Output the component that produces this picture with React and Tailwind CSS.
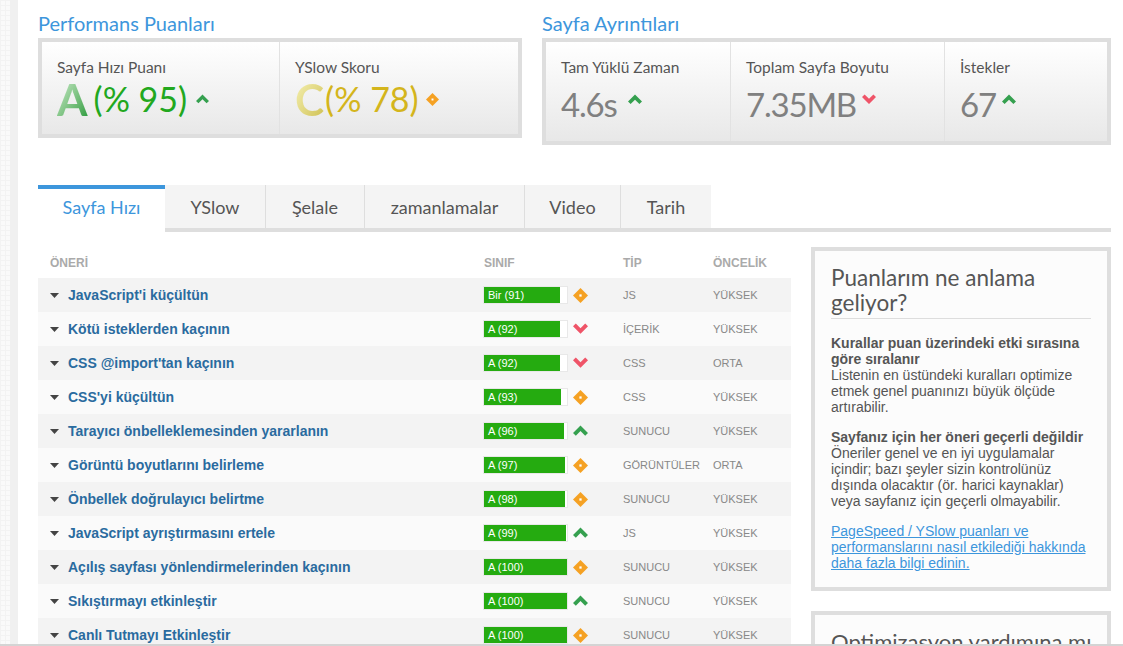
import React from 'react';

const rows = [
  { name: "JavaScript'i küçültün", grade: 'Bir (91)', score: 91, trend: 'same', type: 'JS', priority: 'YÜKSEK' },
  { name: 'Kötü isteklerden kaçının', grade: 'A (92)', score: 92, trend: 'down', type: 'İÇERİK', priority: 'YÜKSEK' },
  { name: "CSS @import'tan kaçının", grade: 'A (92)', score: 92, trend: 'down', type: 'CSS', priority: 'ORTA' },
  { name: "CSS'yi küçültün", grade: 'A (93)', score: 93, trend: 'same', type: 'CSS', priority: 'YÜKSEK' },
  { name: 'Tarayıcı önbelleklemesinden yararlanın', grade: 'A (96)', score: 96, trend: 'up', type: 'SUNUCU', priority: 'YÜKSEK' },
  { name: 'Görüntü boyutlarını belirleme', grade: 'A (97)', score: 97, trend: 'same', type: 'GÖRÜNTÜLER', priority: 'ORTA' },
  { name: 'Önbellek doğrulayıcı belirtme', grade: 'A (98)', score: 98, trend: 'same', type: 'SUNUCU', priority: 'YÜKSEK' },
  { name: 'JavaScript ayrıştırmasını ertele', grade: 'A (99)', score: 99, trend: 'up', type: 'JS', priority: 'YÜKSEK' },
  { name: 'Açılış sayfası yönlendirmelerinden kaçının', grade: 'A (100)', score: 100, trend: 'same', type: 'SUNUCU', priority: 'YÜKSEK' },
  { name: 'Sıkıştırmayı etkinleştir', grade: 'A (100)', score: 100, trend: 'up', type: 'SUNUCU', priority: 'YÜKSEK' },
  { name: 'Canlı Tutmayı Etkinleştir', grade: 'A (100)', score: 100, trend: 'same', type: 'SUNUCU', priority: 'YÜKSEK' },
];

const tabs = [
  { label: 'YSlow', width: 'w-[101px]' },
  { label: 'Şelale', width: 'w-[99px]' },
  { label: 'zamanlamalar', width: 'w-[160px]' },
  { label: 'Video', width: 'w-[96px]' },
  { label: 'Tarih', width: 'w-[90px]' },
];

const TrendIcon = ({ trend, size = 15 }) => {
  if (trend === 'same') {
    return (
      <svg width={size} height={size} viewBox="0 0 16 16" className="shrink-0">
        <path d="M8 0 16 8 8 16 0 8Z" fill="#f5a123" />
        <rect x="6.8" y="6.8" width="2.4" height="2.4" fill="#fff" />
      </svg>
    );
  }
  const up = trend === 'up';
  return (
    <svg width={size} height={size * 0.75} viewBox="0 0 16 12" className="shrink-0">
      <path
        d={up ? 'M0 8.5 8 0.5 16 8.5 13 11.5 8 6.5 3 11.5Z' : 'M0 3.5 3 0.5 8 5.5 13 0.5 16 3.5 8 11.5Z'}
        fill={up ? '#35a04f' : '#ef5468'}
      />
    </svg>
  );
};

const StatLabel = ({ children }) => (
  <div className="text-[15.5px] leading-[20px] text-[#555] font-['Lato',sans-serif]">{children}</div>
);

const DetailStat = ({ label, value, trend, className, iconClass = 'ml-[6px]' }) => (
  <div className={`pl-[15px] pt-[15px] border-r border-[#e2e2e2] last:border-r-0 ${className}`}>
    <StatLabel>{label}</StatLabel>
    <div className="flex items-start mt-[5px]">
      <span className="text-[33px] leading-[44px] tracking-[-1.2px] text-[#808080] font-['Lato',sans-serif]">{value}</span>
      <span className={`${iconClass} mt-[12px]`}><TrendIcon trend={trend} size={14} /></span>
    </div>
  </div>
);

const GradeRow = ({ row, odd }) => (
  <div className={`flex items-center h-[34px] text-[11px] text-[#888] ${odd ? 'bg-[#fafafa]' : 'bg-[#f3f3f3]'}`}>
    <svg width="9" height="5" viewBox="0 0 9 5" className="ml-[12px] shrink-0">
      <path d="M0 0H9L4.5 5Z" fill="#444" />
    </svg>
    <span className="ml-[9px] w-[415px] text-[14px] font-bold text-[#2a6b9f]">{row.name}</span>
    <div className="w-[85px] h-[18px] border border-[#e8e8e8] bg-white">
      <div
        className="h-full bg-[#25ab10] text-white text-[11px] leading-[16px] pl-[4px] whitespace-nowrap"
        style={{ width: `${row.score}%` }}
      >
        {row.grade}
      </div>
    </div>
    <span className="ml-[5px] w-[50px] flex"><TrendIcon trend={row.trend} /></span>
    <span className="w-[90px]">{row.type}</span>
    <span>{row.priority}</span>
  </div>
);

const App = () => {
  return (
    <div className="relative flex h-[646px] overflow-hidden bg-white font-['Liberation_Sans',Arial,sans-serif]">
      <div className="w-[18px] shrink-0 border-r-[8px] border-[#f0f0f0] bg-[#fafafa] bg-[linear-gradient(#f3f3f3_1px,transparent_1px),linear-gradient(90deg,#f3f3f3_1px,transparent_1px)] bg-[size:5px_5px]" />

      <div className="ml-[20px] w-[1073px] shrink-0">
        <div className="flex items-start pt-[11px]">
          <div className="w-[484px]">
            <h2 className="text-[20px] leading-[24px] mb-[3px] text-[#3d96dc] font-['Lato',sans-serif]">Performans Puanları</h2>
            <div className="flex h-[100px] border-4 border-[#dedede] bg-linear-to-b from-white to-[#e8e8e8]">
              <div className="w-[238px] pl-[15px] pt-[15px] border-r border-[#e2e2e2]">
                <StatLabel>Sayfa Hızı Puanı</StatLabel>
                <div className="flex items-center font-['Lato',sans-serif]">
                  <span className="text-[44px] leading-[44px] font-bold bg-linear-to-br from-[#d0efd0] to-[#1f9a3a] bg-clip-text text-transparent">A</span>
                  <span className="ml-[6px] text-[34px] leading-[44px] text-[#22a81e]">(% 95)</span>
                  <span className="ml-[9px]"><TrendIcon trend="up" size={13} /></span>
                </div>
              </div>
              <div className="pl-[15px] pt-[15px]">
                <StatLabel>YSlow Skoru</StatLabel>
                <div className="flex items-center font-['Lato',sans-serif]">
                  <span className="text-[44px] leading-[44px] font-bold bg-linear-to-br from-[#f6f2b4] to-[#cfc04e] bg-clip-text text-transparent">C</span>
                  <span className="ml-[1px] text-[34px] leading-[44px] text-[#d4b51c]">(% 78)</span>
                  <span className="ml-[7px]"><TrendIcon trend="same" size={13} /></span>
                </div>
              </div>
            </div>
          </div>

          <div className="ml-[20px] w-[569px]">
            <h2 className="text-[20px] leading-[24px] mb-[3px] text-[#3d96dc] font-['Lato',sans-serif]">Sayfa Ayrıntıları</h2>
            <div className="flex h-[107px] border-4 border-[#dedede] bg-linear-to-b from-white to-[#e8e8e8]">
              <DetailStat label="Tam Yüklü Zaman" value="4.6s" trend="up" className="w-[185px]" iconClass="ml-[11px]" />
              <DetailStat label="Toplam Sayfa Boyutu" value="7.35MB" trend="down" className="w-[214px]" />
              <DetailStat label="İstekler" value="67" trend="up" className="flex-1" />
            </div>
          </div>
        </div>

        <div className="flex h-[47px] mt-[40px] border-b-4 border-[#dedede] font-['Lato',sans-serif] text-[18px] text-[#555]">
          <div className="w-[127px] h-[47px] pb-[6px] flex items-center justify-center border-t-4 border-[#3d96dc] bg-white text-[#3d96dc]">Sayfa Hızı</div>
          {tabs.map((tab) => (
            <div key={tab.label} className={`${tab.width} pt-[1px] flex items-center justify-center bg-[#f4f4f4] border-r border-[#dedede] last:border-r-0`}>
              {tab.label}
            </div>
          ))}
        </div>

        <div className="flex items-start mt-[15px]">
          <div className="w-[753px] shrink-0">
            <div className="flex items-center h-[31px] text-[12px] font-bold text-[#aaa]">
              <span className="ml-[12px] w-[434px]">ÖNERİ</span>
              <span className="w-[139px]">SINIF</span>
              <span className="w-[90px]">TİP</span>
              <span>ÖNCELİK</span>
            </div>
            {rows.map((row, i) => (
              <GradeRow key={row.name} row={row} odd={i % 2 === 1} />
            ))}
          </div>

          <div className="ml-[20px] w-[300px] shrink-0">
            <div className="h-[344px] border-4 border-[#dedede] bg-[#fcfcfc] px-[16px] pt-[14px] text-[14px] leading-[16px] text-[#555]">
              <h3 className="pb-[3px] border-b border-[#ddd] text-[22.5px] leading-[25px] text-[#555] font-['Lato',sans-serif]">Puanlarım ne anlama geliyor?</h3>
              <p className="mt-[16px]">
                <b>Kurallar puan üzerindeki etki sırasına göre sıralanır</b>
                <br />
                Listenin en üstündeki kuralları optimize etmek genel puanınızı büyük ölçüde artırabilir.
              </p>
              <p className="mt-[14px]">
                <b>Sayfanız için her öneri geçerli değildir</b>
                <br />
                Öneriler genel ve en iyi uygulamalar içindir; bazı şeyler sizin kontrolünüz dışında olacaktır (ör. harici kaynaklar) veya sayfanız için geçerli olmayabilir.
              </p>
              <p className="mt-[14px]">
                <a href="#" className="text-[#3d96dc] underline">PageSpeed / YSlow puanları ve performanslarını nasıl etkilediği hakkında daha fazla bilgi edinin.</a>
              </p>
            </div>
            <div className="mt-[20px] h-[100px] border-4 border-[#dedede] bg-[#fcfcfc] px-[16px] pt-[14px]">
              <h3 className="whitespace-nowrap text-[22px] leading-[25px] text-[#555] font-['Lato',sans-serif]">Optimizasyon yardımına mı</h3>
            </div>
          </div>
        </div>
      </div>

      <div className="absolute bottom-0 inset-x-0 h-[2px] bg-[#d4d4d4]" />
    </div>
  );
};

export default App;
